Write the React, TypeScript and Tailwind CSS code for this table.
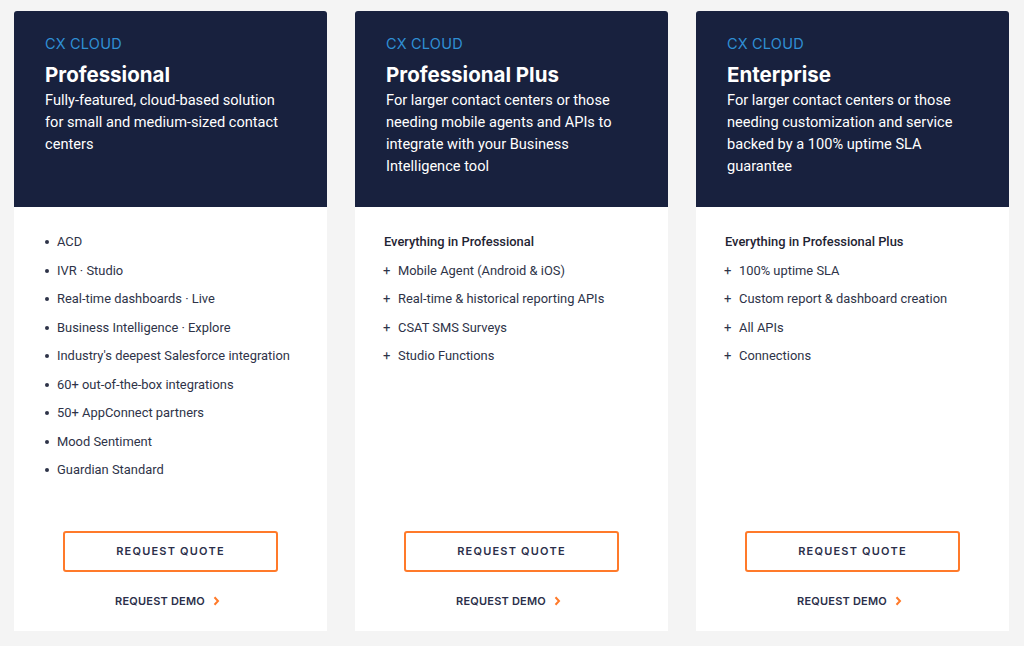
import React from "react";

type Plan = {
  title: string;
  desc: string;
  heading?: string;
  items: string[];
  plus: boolean;
};

const plans: Plan[] = [
  {
    title: "Professional",
    desc: "Fully-featured, cloud-based solution for small and medium-sized contact centers",
    items: [
      "ACD",
      "IVR · Studio",
      "Real-time dashboards · Live",
      "Business Intelligence · Explore",
      "Industry's deepest Salesforce integration",
      "60+ out-of-the-box integrations",
      "50+ AppConnect partners",
      "Mood Sentiment",
      "Guardian Standard",
    ],
    plus: false,
  },
  {
    title: "Professional Plus",
    desc: "For larger contact centers or those needing mobile agents and APIs to integrate with your Business Intelligence tool",
    heading: "Everything in Professional",
    items: [
      "Mobile Agent (Android & iOS)",
      "Real-time & historical reporting APIs",
      "CSAT SMS Surveys",
      "Studio Functions",
    ],
    plus: true,
  },
  {
    title: "Enterprise",
    desc: "For larger contact centers or those needing customization and service backed by a 100% uptime SLA guarantee",
    heading: "Everything in Professional Plus",
    items: ["100% uptime SLA", "Custom report & dashboard creation", "All APIs", "Connections"],
    plus: true,
  },
];

const roboto = { fontFamily: "Roboto, 'Liberation Sans', sans-serif" };
const poppins = { fontFamily: "Inter, 'Liberation Sans', sans-serif" };

function Card({ p }: { p: Plan }) {
  return (
    <div className="w-[313px] h-[620px] bg-white flex flex-col rounded-t-[3px]">
      <div className="h-[196px] bg-[#18213e] rounded-t-[3px] pl-[31px] pr-[40px] pt-[23px]">
        <div className="text-[14.5px] leading-[20px] text-[#2f8fd4] tracking-[0.2px]" style={poppins}>
          CX CLOUD
        </div>
        <div className="mt-[8px] text-[20.5px] leading-[26px] font-bold text-white" style={poppins}>
          {p.title}
        </div>
        <div className="mt-[1px] text-[14.6px] leading-[22px] text-white" style={roboto}>
          {p.desc}
        </div>
      </div>
      <div className="flex-1 flex flex-col pl-[29px] pr-[20px] pt-[25px]" style={roboto}>
        <ul className="flex flex-col gap-[8.5px] text-[12.9px] leading-[20px] text-[#2e3348]">
          {p.heading && <li className="font-medium text-[#1f2433]">{p.heading}</li>}
          {p.items.map((it) => (
            <li key={it} className="flex items-center">
              {p.plus ? (
                <span className="w-[14px] -ml-[1px] mr-[1px] text-[13px]">+</span>
              ) : (
                <span className="w-[14px] pl-[2px] flex items-center">
                  <span className="block w-[4px] h-[4px] rounded-full bg-[#2e3348]" />
                </span>
              )}
              <span>{it}</span>
            </li>
          ))}
        </ul>
        <div className="mt-auto flex flex-col items-center pb-[22px] -ml-[9px]">
          <div
            className="w-[215px] h-[41px] border-2 border-[#ff7a2a] rounded-[3px] flex items-center justify-center text-[11px] font-semibold tracking-[1.2px] text-[#2b2f4a]"
            style={poppins}
          >
            REQUEST QUOTE
          </div>
          <div
            className="mt-[21px] h-[16px] flex items-center gap-[8px] text-[11px] font-semibold text-[#2b2f4a] tracking-[0.2px] pr-[6px]"
            style={poppins}
          >
            <span>REQUEST DEMO</span>
            <svg width="7" height="10" viewBox="0 0 7 10">
              <path d="M1.5 1.2 L5 5 L1.5 8.8" fill="none" stroke="#ff7a2a" strokeWidth="2" />
            </svg>
          </div>
        </div>
      </div>
    </div>
  );
}

export default function App() {
  return (
    <div className="w-[1024px] h-[646px] bg-[#f4f4f4] flex gap-[28px] pl-[14px] pt-[11px] overflow-hidden">
      {plans.map((p) => (
        <Card key={p.title} p={p} />
      ))}
    </div>
  );
}
